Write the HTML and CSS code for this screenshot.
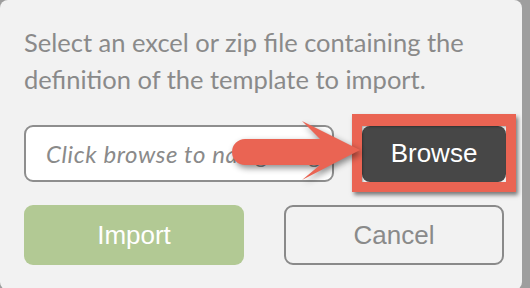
FILE: index.html
```html
<!DOCTYPE html>
<html>
<head>
<meta charset="utf-8">
<link rel="stylesheet" href="styles.css">
</head>
<body>
<div class="panel">
  <p class="desc">Select an excel or zip file containing the definition of the template to import.</p>
  <div class="file-row">
    <div class="file-input">Click browse to navigating to the file</div>
    <div class="browse-wrap">
      <button class="browse">Browse</button>
      <div class="highlight"></div>
    </div>
  </div>
  <div class="actions">
    <button class="btn import">Import</button>
    <button class="btn cancel">Cancel</button>
  </div>
  <svg class="arrow" width="140" height="75" viewBox="225 115 140 75">
    <path d="M245 139 L320 139 L302 121 L360 150 L302 180 L320 165 L245 165 A13 13 0 0 1 245 139 Z" fill="#ea6453"/>
  </svg>
</div>
</body>
</html>
```
FILE: styles.css
```css
html, body {
  margin: 0;
  padding: 0;
  background: #9e9e9e;
}
.panel {
  position: relative;
  width: 522px;
  height: 290px;
  box-sizing: border-box;
  background: #f2f2f2;
  border-radius: 8px;
  padding: 24px 10px 0 24px;
  overflow: hidden;
}
.desc {
  margin: 0;
  font-family: Lato, "Open Sans", sans-serif;
  font-size: 25.5px;
  line-height: 37px;
  color: #8a8a8a;
}
.file-row {
  display: flex;
  align-items: center;
  margin-top: 27px;
}
.file-input {
  width: 310px;
  height: 57px;
  box-sizing: border-box;
  background: #fff;
  border: 2px solid #8e8e8e;
  border-radius: 9px;
  padding-left: 20px;
  font-family: Lato, "Open Sans", sans-serif;
  font-style: italic;
  font-size: 24px;
  letter-spacing: 0.6px;
  line-height: 53px;
  color: #8a8a8a;
  white-space: nowrap;
  overflow: hidden;
}
.browse-wrap {
  position: relative;
  margin-left: 28px;
}
.browse {
  display: block;
  width: 144px;
  height: 56px;
  border: none;
  border-radius: 8px;
  background: #474747;
  color: #fff;
  font-family: "Liberation Sans", Arial, sans-serif;
  font-size: 26px;
  padding: 0;
}
.highlight {
  position: absolute;
  left: -10px;
  top: -12px;
  right: -10px;
  bottom: -10px;
  border: 10px solid #ea6453;
  border-top-width: 12px;
  box-shadow: 2px 3px 4px rgba(0,0,0,0.5), inset 1px 1px 2px rgba(0,0,0,0.3);
}
.actions {
  display: grid;
  grid-template-columns: 220px 220px;
  column-gap: 40px;
  margin-top: 23px;
}
.btn {
  height: 60px;
  border-radius: 9px;
  font-family: "Liberation Sans", Arial, sans-serif;
  font-size: 26px;
  padding: 0;
  box-sizing: border-box;
}
.import {
  background: #b2c994;
  color: #fff;
  border: none;
}
.cancel {
  background: transparent;
  border: 2px solid #8a8a8a;
  color: #8a8a8a;
}
.arrow {
  position: absolute;
  left: 225px;
  top: 115px;
  filter: drop-shadow(2px 3px 3px rgba(0,0,0,0.45));
}
```
